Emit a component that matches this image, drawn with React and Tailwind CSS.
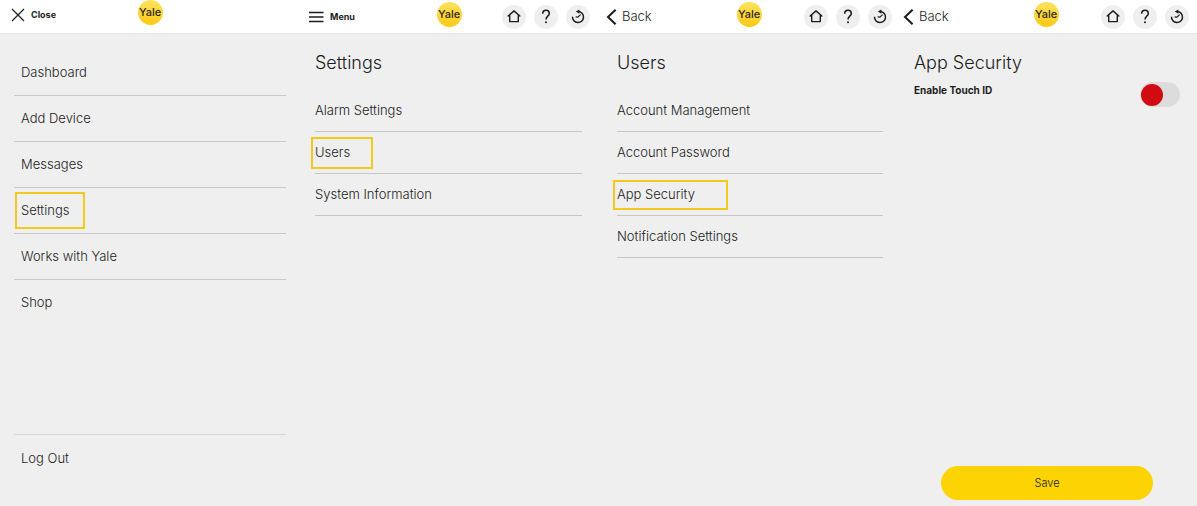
import { useState } from "react";

const menuItems = ["Dashboard", "Add Device", "Messages", "Settings", "Works with Yale", "Shop"];
const settingsItems = ["Alarm Settings", "Users", "System Information"];
const userItems = ["Account Management", "Account Password", "App Security", "Notification Settings"];

const Logo = () => (
  <div className="pb-1">
    <div className="w-[25px] h-[25px] rounded-full bg-linear-to-b from-[#fde25a] to-[#fdca00] flex items-center justify-center text-[11px] leading-none font-medium text-[#2b2718]">
      Yale
    </div>
  </div>
);

const CloseIcon = () => (
  <svg className="w-[14px] h-[14px]" viewBox="0 0 14 14" fill="none" stroke="#222" strokeWidth="1.3">
    <path d="M1 1l12 12M13 1L1 13" />
  </svg>
);

const MenuIcon = () => (
  <svg className="w-4 h-3" viewBox="0 0 16 12" fill="none" stroke="#1c1c1c" strokeWidth="1.5">
    <path d="M1 1.5h14.5M1 6h14.5M1 10.5h14.5" />
  </svg>
);

const BackIcon = () => (
  <svg className="w-[11px] h-4" viewBox="0 0 11 16" fill="none" stroke="#1c1c1c" strokeWidth="2">
    <path d="M9.6 0.8L2 8l7.6 7.2" />
  </svg>
);

const HomeIcon = () => (
  <svg className="w-4 h-4" viewBox="0 0 16 16" fill="none" stroke="#1c1c1c" strokeWidth="1.4" strokeLinejoin="round" strokeLinecap="round">
    <path d="M2.2 7L8 1.9l5.8 5.1M3.7 6v6.6h8.6V6" />
  </svg>
);

const HelpIcon = () => (
  <svg className="w-4 h-4" viewBox="0 0 16 16" fill="none" stroke="#1c1c1c" strokeWidth="1.5">
    <path d="M4.7 4.7C4.7 2.5 6.1 1.3 8 1.3s3.3 1.2 3.3 3.1c0 2.7-3.3 2.8-3.3 6" />
    <circle cx="8" cy="13.2" r="1" fill="#1c1c1c" stroke="none" />
  </svg>
);

const HistoryIcon = () => (
  <svg className="w-4 h-4" viewBox="0 0 16 16" fill="none" stroke="#1c1c1c" strokeWidth="1.5">
    <path d="M2.5 7.8A5.5 5.5 0 1 0 8.6 2.6" />
    <path d="M5.6 7.8l2.3 0.4 2.7-2.6" strokeWidth="1.2" />
    <path d="M9.4 0.6v4.2L5.8 2.4z" fill="#1c1c1c" stroke="none" />
  </svg>
);

const RoundButton = ({ label, children }) => (
  <button aria-label={label} className="w-6 h-6 rounded-full bg-[#efefef] flex items-center justify-center">
    {children}
  </button>
);

const Header = ({ className, left, actions = true }) => (
  <header className={`h-[34px] bg-white border-b border-[#e6e6e6] grid grid-cols-[1fr_auto_1fr] items-center ${className}`}>
    {left}
    <Logo />
    {actions && (
      <div className="flex gap-2 justify-end">
        <RoundButton label="Home"><HomeIcon /></RoundButton>
        <RoundButton label="Help"><HelpIcon /></RoundButton>
        <RoundButton label="History"><HistoryIcon /></RoundButton>
      </div>
    )}
  </header>
);

const BackButton = () => (
  <button className="flex items-center gap-[5px] text-[13px]">
    <BackIcon />
    Back
  </button>
);

const SubList = ({ items, active, activeClass }) => (
  <ul className="mt-[14px]">
    {items.map((item) => (
      <li key={item} className="h-[42px] border-b border-[#c6c6c6] flex items-center">
        <a
          href="#"
          className={`-ml-1 border-2 pl-0.5 text-[13px] flex items-center ${
            item === active ? activeClass : "border-transparent"
          }`}
        >
          {item}
        </a>
      </li>
    ))}
  </ul>
);

const App = () => {
  const [touchId, setTouchId] = useState(false);

  return (
    <div className="min-h-screen bg-[#efefef] grid grid-cols-[300fr_300fr_297fr_300fr] font-['Inter',sans-serif] font-light text-[#1c1c1c]">
      {/* Main menu */}
      <section className="flex flex-col">
        <Header
          className="px-[11px] pb-[10px]"
          actions={false}
          left={
            <button className="flex items-center gap-[6px] text-[9px] font-bold">
              <CloseIcon />
              Close
            </button>
          }
        />
        <nav className="flex-1 flex flex-col pt-4 pb-6 px-[14px]">
          <ul>
            {menuItems.map((item) => (
              <li key={item} className="h-[46px] pl-px border-b border-[#c9c9c9] last:border-transparent flex items-center">
                <a
                  href="#"
                  className={`border-2 pl-1 text-[13px] flex items-center ${
                    item === "Settings" ? "border-[#f2c91c] h-[37px] w-[70px]" : "border-transparent"
                  }`}
                >
                  {item}
                </a>
              </li>
            ))}
          </ul>
          <button className="mt-auto h-12 border-t border-[#d6d6d6] pl-[7px] text-[13px] text-left">Log Out</button>
        </nav>
      </section>

      {/* Settings */}
      <section>
        <Header
          className="pl-2 pr-[10px]"
          left={
            <button className="flex items-center gap-[6px] text-[9px] font-bold">
              <MenuIcon />
              Menu
            </button>
          }
        />
        <div className="pt-4 pl-[15px] pr-[18px]">
          <h1 className="text-lg leading-[26px]">Settings</h1>
          <SubList items={settingsItems} active="Users" activeClass="border-[#f2c91c] w-[62px] h-8" />
        </div>
      </section>

      {/* Users */}
      <section>
        <Header className="pl-[6px] pr-[5px]" left={<BackButton />} />
        <div className="pt-4 pl-[17px] pr-[14px]">
          <h1 className="text-lg leading-[26px]">Users</h1>
          <SubList items={userItems} active="App Security" activeClass="border-[#f2c91c] w-[115px] h-[30px]" />
        </div>
      </section>

      {/* App security */}
      <section className="flex flex-col">
        <Header className="pl-[6px] pr-2" left={<BackButton />} />
        <div className="flex-1 flex flex-col pt-4 pb-[6px] px-[17px]">
          <h1 className="text-lg leading-[26px]">App Security</h1>
          <div className="mt-[6px] flex items-start justify-between">
            <label htmlFor="touch-id" className="text-[10px] leading-4 font-bold">
              Enable Touch ID
            </label>
            <input
              id="touch-id"
              type="checkbox"
              role="switch"
              checked={touchId}
              onChange={(e) => setTouchId(e.target.checked)}
              className="appearance-none w-10 h-[25px] rounded-full bg-[#dcdcdc] p-px flex items-center before:block before:w-[22px] before:h-[22px] before:rounded-full before:bg-[#d20a11] checked:before:ml-auto checked:before:bg-green-600"
            />
          </div>
          <button className="mt-auto self-center w-4/5 h-[34px] rounded-full bg-[#fdd303] text-[11px]">Save</button>
        </div>
      </section>
    </div>
  );
};

export default App;
